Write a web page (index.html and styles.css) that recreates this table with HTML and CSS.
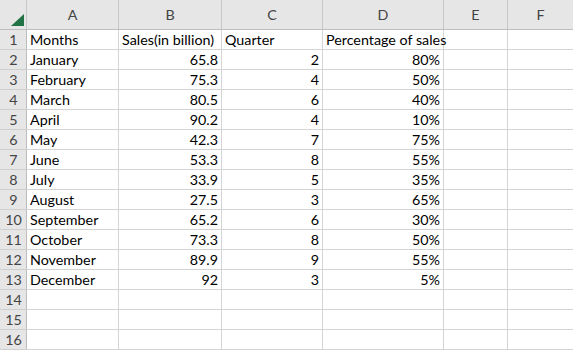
FILE: index.html
```html
<!DOCTYPE html>
<html>
<head>
<meta charset="utf-8">
<link rel="stylesheet" href="styles.css">
</head>
<body>
<table class="sheet">
  <colgroup>
    <col class="c-rh"><col class="c-a"><col class="c-b"><col class="c-c"><col class="c-d"><col class="c-e"><col class="c-f">
  </colgroup>
  <thead>
    <tr class="hdr">
      <th class="corner"><span class="tri"></span></th>
      <th>A</th><th>B</th><th>C</th><th>D</th><th>E</th><th>F</th>
    </tr>
  </thead>
  <tbody>
    <tr><th>1</th><td>Months</td><td>Sales(in billion)</td><td>Quarter</td><td>Percentage of sales</td><td></td><td></td></tr>
    <tr><th>2</th><td>January</td><td class="n">65.8</td><td class="n">2</td><td class="n">80%</td><td></td><td></td></tr>
    <tr><th>3</th><td>February</td><td class="n">75.3</td><td class="n">4</td><td class="n">50%</td><td></td><td></td></tr>
    <tr><th>4</th><td>March</td><td class="n">80.5</td><td class="n">6</td><td class="n">40%</td><td></td><td></td></tr>
    <tr><th>5</th><td>April</td><td class="n">90.2</td><td class="n">4</td><td class="n">10%</td><td></td><td></td></tr>
    <tr><th>6</th><td>May</td><td class="n">42.3</td><td class="n">7</td><td class="n">75%</td><td></td><td></td></tr>
    <tr><th>7</th><td>June</td><td class="n">53.3</td><td class="n">8</td><td class="n">55%</td><td></td><td></td></tr>
    <tr><th>8</th><td>July</td><td class="n">33.9</td><td class="n">5</td><td class="n">35%</td><td></td><td></td></tr>
    <tr><th>9</th><td>August</td><td class="n">27.5</td><td class="n">3</td><td class="n">65%</td><td></td><td></td></tr>
    <tr><th>10</th><td>September</td><td class="n">65.2</td><td class="n">6</td><td class="n">30%</td><td></td><td></td></tr>
    <tr><th>11</th><td>October</td><td class="n">73.3</td><td class="n">8</td><td class="n">50%</td><td></td><td></td></tr>
    <tr><th>12</th><td>November</td><td class="n">89.9</td><td class="n">9</td><td class="n">55%</td><td></td><td></td></tr>
    <tr><th>13</th><td>December</td><td class="n">92</td><td class="n">3</td><td class="n">5%</td><td></td><td></td></tr>
    <tr><th>14</th><td></td><td></td><td></td><td></td><td></td><td></td></tr>
    <tr><th>15</th><td></td><td></td><td></td><td></td><td></td><td></td></tr>
    <tr><th>16</th><td></td><td></td><td></td><td></td><td></td><td></td></tr>
  </tbody>
</table>
</body>
</html>
```
FILE: styles.css
```css
html, body {
  margin: 0;
  padding: 0;
  background: #ffffff;
  overflow: hidden;
}
.sheet {
  border-collapse: collapse;
  table-layout: fixed;
  width: 573px;
  font-family: "Lato", "Liberation Sans", sans-serif;
  font-size: 14.3px;
  color: #000;
}
.c-rh { width: 26px; }
.c-a { width: 92px; }
.c-b { width: 103px; }
.c-c { width: 101px; }
.c-d { width: 121px; }
.c-e { width: 64px; }
.c-f { width: 66px; }
.sheet td, .sheet th {
  padding: 0 3px;
  white-space: nowrap;
  overflow: visible;
  border: 1px solid #d4d4d4;
  height: 19px;
  line-height: 19px;
}
.sheet td { text-align: left; }
.sheet td.n { text-align: right; padding-right: 3px; }
.sheet tbody th {
  background: #e6e6e6;
  color: #444;
  font-weight: normal;
  text-align: center;
  padding: 0;
  border-color: #cfcfcf #bdbdbd #cfcfcf #e6e6e6;
}
.hdr th {
  background: #e6e6e6;
  color: #444;
  font-weight: normal;
  text-align: center;
  height: 28px;
  line-height: 28px;
  border-color: #e6e6e6 #c8c8c8 #bdbdbd #c8c8c8;
  padding: 0;
  vertical-align: middle;
}
.hdr th.corner {
  position: relative;
  border-left-color: #e6e6e6;
  border-top-color: #e6e6e6;
}
.tri {
  position: absolute;
  right: 2px;
  bottom: 3px;
  width: 0;
  height: 0;
  border-style: solid;
  border-width: 0 0 12px 13px;
  border-color: transparent transparent #217346 transparent;
}
```
